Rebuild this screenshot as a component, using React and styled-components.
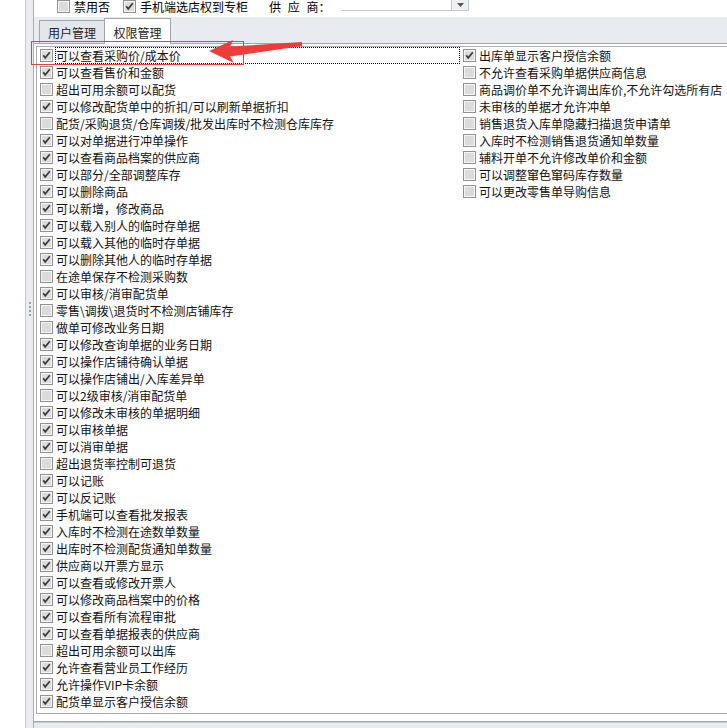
import React from "react";
import styled, { createGlobalStyle } from "styled-components";

const GlobalStyle = createGlobalStyle`
  body {
    margin: 0;
    background: #ffffff;
    font-family: "Noto Sans CJK SC", "Liberation Sans", sans-serif;
    font-size: 12px;
    color: #000;
  }
`;

const leftItems = [
  ["可以查看采购价/成本价", true],
  ["可以查看售价和金额", true],
  ["超出可用余额可以配货", false],
  ["可以修改配货单中的折扣/可以刷新单据折扣", true],
  ["配货/采购退货/仓库调拨/批发出库时不检测仓库库存", false],
  ["可以对单据进行冲单操作", true],
  ["可以查看商品档案的供应商", true],
  ["可以部分/全部调整库存", true],
  ["可以删除商品", true],
  ["可以新增，修改商品", true],
  ["可以载入别人的临时存单据", true],
  ["可以载入其他的临时存单据", true],
  ["可以删除其他人的临时存单据", true],
  ["在途单保存不检测采购数", false],
  ["可以审核/消审配货单", true],
  ["零售\\调拨\\退货时不检测店铺库存", false],
  ["做单可修改业务日期", false],
  ["可以修改查询单据的业务日期", true],
  ["可以操作店铺待确认单据", true],
  ["可以操作店铺出/入库差异单", true],
  ["可以2级审核/消审配货单", false],
  ["可以修改未审核的单据明细", true],
  ["可以审核单据", true],
  ["可以消审单据", true],
  ["超出退货率控制可退货", false],
  ["可以记账", true],
  ["可以反记账", true],
  ["手机端可以查看批发报表", true],
  ["入库时不检测在途数单数量", true],
  ["出库时不检测配货通知单数量", true],
  ["供应商以开票方显示", true],
  ["可以查看或修改开票人", true],
  ["可以修改商品档案中的价格", true],
  ["可以查看所有流程审批", true],
  ["可以查看单据报表的供应商", true],
  ["超出可用余额可以出库", false],
  ["允许查看营业员工作经历", true],
  ["允许操作VIP卡余额", true],
  ["配货单显示客户授信余额", true],
];

const rightItems = [
  ["出库单显示客户授信余额", true],
  ["不允许查看采购单据供应商信息", false],
  ["商品调价单不允许调出库价,不允许勾选所有店", false],
  ["未审核的单据才允许冲单", false],
  ["销售退货入库单隐藏扫描退货申请单", false],
  ["入库时不检测销售退货通知单数量", false],
  ["辅料开单不允许修改单价和金额", false],
  ["可以调整窜色窜码库存数量", false],
  ["可以更改零售单导购信息", false],
];

const CheckBox = ({ checked }) => (
  <BoxSvg width="13" height="13" viewBox="0 0 13 13">
    <rect x="0.5" y="0.5" width="12" height="12" fill="#f6f6f6" stroke="#929292" />
    <rect x="2" y="2" width="9" height="9" fill="#dcdcdc" />
    {checked && (
      <path d="M3.2 6.3 L5.2 8.8 L9.8 3.2" stroke="#3a3a3a" strokeWidth="1.7" fill="none" />
    )}
  </BoxSvg>
);

const App = () => {
  return (
    <Page>
      <GlobalStyle />
      <Gutter />
      <Splitter>
        <Grip />
      </Splitter>
      <Main>
        <TopBar>
          <TopItem w={66}>
            <CheckBox checked={false} />
            <span>禁用否</span>
          </TopItem>
          <TopItem w={146}>
            <CheckBox checked={true} />
            <span>手机端选店权到专柜</span>
          </TopItem>
          <TopItem w={72}>
            <Spaced>供 应 商：</Spaced>
          </TopItem>
          <Combo>
            <ComboBtn>
              <svg width="7" height="4" viewBox="0 0 7 4">
                <path d="M0 0 H7 L3.5 4 Z" fill="#555" />
              </svg>
            </ComboBtn>
          </Combo>
        </TopBar>
        <TabStrip>
          <Tab>用户管理</Tab>
          <Tab active>权限管理</Tab>
        </TabStrip>
        <Panel>
          <ListBox>
            <Column w={423}>
              {leftItems.map(([text, checked], i) => (
                <Row key={i}>
                  <CheckBox checked={checked} />
                  <Label focused={i === 0}>{text}</Label>
                </Row>
              ))}
            </Column>
            <Column>
              {rightItems.map(([text, checked], i) => (
                <Row key={i}>
                  <CheckBox checked={checked} />
                  <Label>{text}</Label>
                </Row>
              ))}
            </Column>
          </ListBox>
        </Panel>
        <Footer />
      </Main>

      <RedBox />
      <Arrow width="98" height="28" viewBox="206 38 98 28">
        <polygon
          points="209,51 233,40 230,46.5 302,42 302,46 230,56.5 234,63"
          fill="#f03b3b"
        />
      </Arrow>
    </Page>
  );
};

const Page = styled.div`
  position: relative;
  display: flex;
  width: 727px;
  height: 728px;
  overflow: hidden;
  background: #fff;
`;

const Gutter = styled.div`
  width: 25px;
  flex-shrink: 0;
  background: #fff;
`;

const Splitter = styled.div`
  width: 7px;
  flex-shrink: 0;
  background: #eaecef;
  border-left: 1px solid #c8cbcf;
  border-right: 1px solid #a9adb2;
  display: flex;
  justify-content: center;
`;

const Grip = styled.div`
  margin-top: 302px;
  width: 2px;
  height: 14px;
  background: repeating-linear-gradient(
    to bottom,
    #9aa0a6 0px,
    #9aa0a6 2px,
    transparent 2px,
    transparent 4px
  );
`;

const Main = styled.div`
  flex: 1;
  display: flex;
  flex-direction: column;
  margin-right: -30px;
  min-width: 0;
`;

const TopBar = styled.div`
  height: 17px;
  display: flex;
  align-items: flex-start;
  padding-left: 23px;
  overflow: hidden;
  background: #fff;
`;

const TopItem = styled.div`
  width: ${(p) => p.w}px;
  flex-shrink: 0;
  display: flex;
  align-items: center;
  gap: 4px;
  height: 13px;
  margin-top: 0;
  line-height: 13px;
  white-space: nowrap;
`;

const Spaced = styled.span`
  word-spacing: 4px;
`;

const Combo = styled.div`
  width: 128px;
  height: 10px;
  flex-shrink: 0;
  border-bottom: 1px solid #c5c8cc;
  display: flex;
  justify-content: flex-end;
`;

const ComboBtn = styled.div`
  width: 16px;
  height: 10px;
  background: #eef0f2;
  border-left: 1px solid #c5c8cc;
  border-right: 1px solid #c5c8cc;
  display: flex;
  align-items: center;
  justify-content: center;
`;

const TabStrip = styled.div`
  height: 26px;
  background: #e8ebf0;
  display: flex;
  align-items: flex-end;
  padding-left: 5px;
`;

const Tab = styled.div`
  box-sizing: border-box;
  width: ${(p) => (p.active ? 67 : 65)}px;
  height: ${(p) => (p.active ? 26 : 23)}px;
  background: ${(p) => (p.active ? "#ffffff" : "#e3e6eb")};
  border: 1px solid #a3a7ac;
  border-bottom: none;
  ${(p) => (p.active ? "" : "border-right: none;")}
  margin-bottom: ${(p) => (p.active ? "-1px" : "0")};
  position: relative;
  display: flex;
  align-items: center;
  justify-content: center;
  padding-top: ${(p) => (p.active ? "2px" : "1px")};
  color: #222;
  font-size: 12px;
`;

const Panel = styled.div`
  flex: 1;
  background: #fff;
  border-top: 1px solid #a3a7ac;
  border-bottom: 1px solid #a3a7ac;
  padding: 2px 0 7px 2px;
  display: flex;
  flex-direction: column;
`;

const ListBox = styled.div`
  flex: 1;
  border: 1px solid #a9acb1;
  display: flex;
  align-items: flex-start;
`;

const Column = styled.div`
  ${(p) => (p.w ? `width: ${p.w}px;` : "flex: 1;")}
  flex-shrink: 0;
  display: flex;
  flex-direction: column;
  padding-left: 3px;
  box-sizing: border-box;
`;

const Row = styled.div`
  height: 17px;
  display: flex;
  align-items: center;
  white-space: nowrap;
`;

const BoxSvg = styled.svg`
  flex-shrink: 0;
  display: block;
`;

const Label = styled.span`
  flex: 1;
  box-sizing: border-box;
  height: 17px;
  line-height: 16px;
  margin-left: 2px;
  padding-left: 1px;
  border: 1px dotted ${(p) => (p.focused ? "#000" : "transparent")};
  border-left: none;
  ${(p) => (p.focused ? "border-left: 1px dotted #000; padding-left: 0;" : "")}
  color: #111;
  font-size: 12px;
`;

const Footer = styled.div`
  height: 5px;
  background: #e8ebf0;
  border-top: 1px solid #c5c8cc;
`;

const RedBox = styled.div`
  position: absolute;
  left: 31px;
  top: 41px;
  width: 211px;
  height: 22px;
  border: 1px solid #e8403e;
  pointer-events: none;
`;

const Arrow = styled.svg`
  position: absolute;
  left: 206px;
  top: 38px;
  pointer-events: none;
`;

export default App;
